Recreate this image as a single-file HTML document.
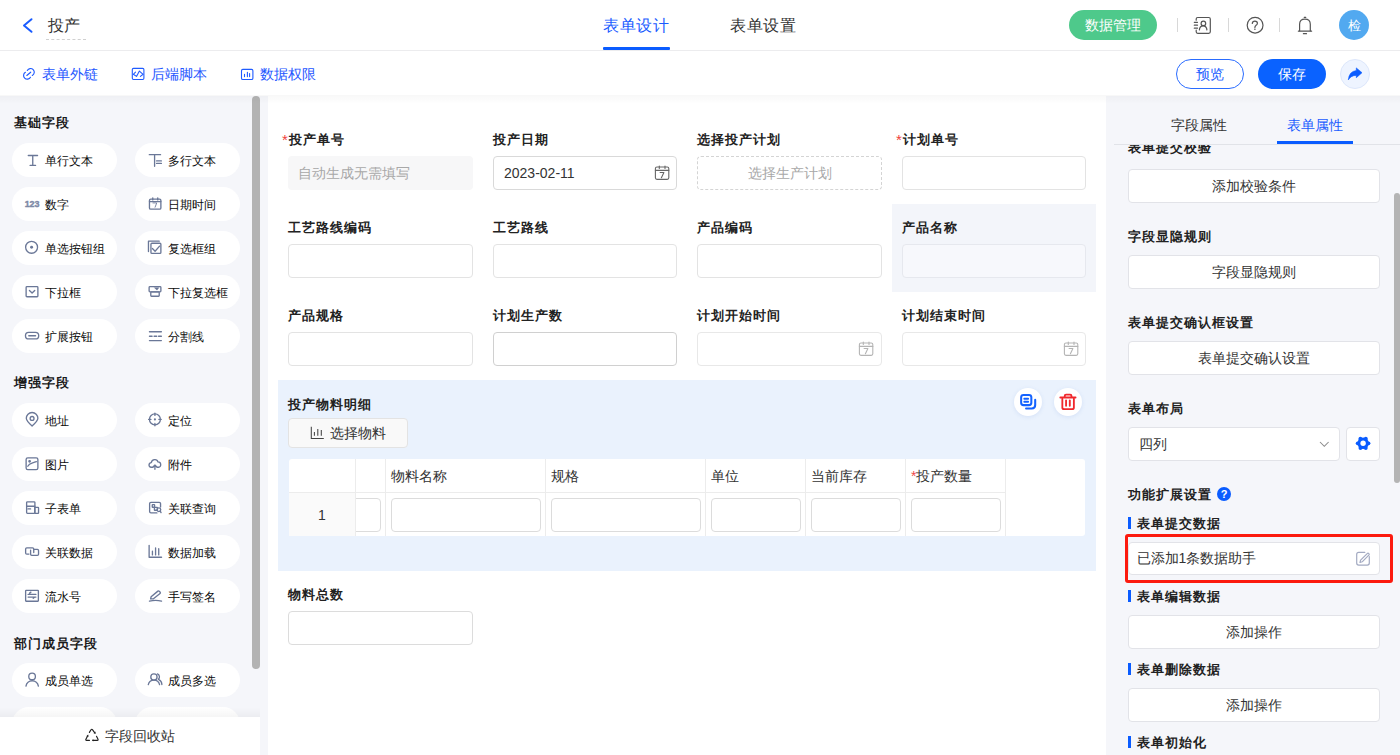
<!DOCTYPE html>
<html><head><meta charset="utf-8">
<style>
*{box-sizing:border-box;margin:0;padding:0}
html,body{width:1400px;height:755px;overflow:hidden;background:#fff;font-family:"Liberation Sans",sans-serif;color:#333}
.a{position:absolute;white-space:nowrap}
.t14{font-size:14px;line-height:20px;height:20px}
.t16{font-size:16px;line-height:20px;height:20px}
.b{font-weight:bold}
svg{position:absolute;overflow:visible}
#hdr{position:absolute;left:0;top:0;width:1400px;height:51px;background:#fff;border-bottom:1px solid #ececee}
#lp{position:absolute;left:0;top:96px;width:268px;height:659px;background:#f5f6fa}
#cv{position:absolute;left:268px;top:96px;width:838px;height:659px;background:#fff}
#rp{position:absolute;left:1106px;top:96px;width:294px;height:659px;background:#f5f6fa}
#shadow{position:absolute;left:0;top:95px;width:1400px;height:9px;background:linear-gradient(rgba(0,0,0,0.03),rgba(0,0,0,0.022) 20%,rgba(0,0,0,0))}
.pill{position:absolute;width:105px;height:34px;border-radius:17px;background:#fff}
.lbl{position:absolute;font-size:13px;letter-spacing:1px;line-height:20px;font-weight:bold;color:#222;white-space:nowrap}
.lbl i{font-style:normal;color:#f04a4a;font-weight:normal}
.inp{position:absolute;width:185px;height:34px;border:1px solid #dcdcdc;border-radius:4px;background:#fff}
.rbtn{position:absolute;left:22px;width:252px;height:34px;border:1px solid #e2e3e8;border-radius:4px;background:#fff;text-align:center;font-size:14px;line-height:32px;color:#333;white-space:nowrap}
.rh{position:absolute;left:22px;font-size:13px;letter-spacing:1px;line-height:20px;font-weight:bold;color:#222;white-space:nowrap}
.bar{position:absolute;left:22px;width:3px;height:12px;background:#0a5cff}

</style></head>
<body>
<div id="hdr"></div>
<div class="a t16" style="left:48px;top:16px;color:#333">投产</div>
<div class="a" style="left:46px;top:39px;width:40px;height:0;border-top:1px dashed #d0d0d0"></div>
<div class="a t16" style="left:603px;top:16px;color:#1a5cff;letter-spacing:0.6px">表单设计</div>
<div class="a" style="left:603px;top:47px;width:67px;height:3px;background:#0a5cff;border-radius:1px"></div>
<div class="a t16" style="left:730px;top:16px;color:#333;letter-spacing:0.6px">表单设置</div>
<div class="a" style="left:1069px;top:10px;width:88px;height:30px;border-radius:15px;background:#4ec98b;color:#fff;font-size:14px;line-height:30px;text-align:center">数据管理</div>
<div class="a" style="left:1177px;top:18px;width:1px;height:14px;background:#d8d8d8"></div>
<div class="a" style="left:1228px;top:18px;width:1px;height:14px;background:#d8d8d8"></div>
<div class="a" style="left:1279px;top:18px;width:1px;height:14px;background:#d8d8d8"></div>
<div class="a" style="left:1339px;top:10px;width:30px;height:30px;border-radius:15px;background:#52a9f0;color:#fff;font-size:13px;line-height:31px;text-align:center">检</div>
<svg style="left:22px;top:18px" width="11" height="15" viewBox="0 0 11 15"><path d="M9.5 1.2L2 7.5L9.5 13.8" fill="none" stroke="#1a5cff" stroke-width="2" stroke-linecap="round" stroke-linejoin="round"/></svg>
<svg style="left:1190px;top:13px" width="26" height="26" viewBox="0 0 26 26"><g fill="none" stroke="#555" stroke-width="1.2" stroke-linecap="round"><path d="M6.2 7.2V6Q6.2 4.5 7.7 4.5H18.8Q20.3 4.5 20.3 6V18.8Q20.3 20.3 18.8 20.3H7.7Q6.2 20.3 6.2 18.8V17.2"/><path d="M4.3 9.3H7.5M4.3 12.2H7.5M4.3 15.2H7.5"/><circle cx="13.4" cy="10.4" r="2.3"/><path d="M9.4 16.9Q9.6 12.8 13.1 12.8Q16.7 12.8 16.9 16.9"/></g></svg>
<svg style="left:1242px;top:13px" width="26" height="26" viewBox="0 0 26 26"><g fill="none" stroke="#555" stroke-width="1.2" stroke-linecap="round"><circle cx="13.1" cy="12.2" r="7.9"/><path d="M10.3 10.4Q10.3 8.1 12.9 8.1Q15.4 8.1 15.4 10.2Q15.4 11.6 13.9 12.4Q12.9 13 12.9 14.6"/></g><circle cx="12.9" cy="16.3" r="0.8" fill="#555"/></svg>
<svg style="left:1292px;top:13px" width="26" height="26" viewBox="0 0 26 26"><g fill="none" stroke="#555" stroke-width="1.2" stroke-linecap="round" stroke-linejoin="round"><path d="M7.6 17.8V11.2Q7.6 6.2 12.95 6.2Q18.3 6.2 18.3 11.2V17.8"/><path d="M6.4 18.2H19.6M12.2 4.3H13.8M11.4 20.7H14.5"/></g></svg>
<div class="a t14" style="left:42px;top:64px;color:#2456ff">表单外链</div>
<div class="a t14" style="left:151px;top:64px;color:#2456ff">后端脚本</div>
<div class="a t14" style="left:260px;top:64px;color:#2456ff">数据权限</div>
<div class="a" style="left:1176px;top:59px;width:68px;height:30px;border:1px solid #2a6cff;border-radius:15px;color:#1a5cff;font-size:14px;line-height:28px;text-align:center">预览</div>
<div class="a" style="left:1258px;top:59px;width:68px;height:30px;border-radius:15px;background:#0a62ff;color:#fff;font-size:14px;line-height:30px;text-align:center">保存</div>
<div class="a" style="left:1340px;top:59px;width:30px;height:30px;border-radius:15px;background:#eef4ff;border:1px solid #dde7fb"></div>
<svg style="left:18px;top:62px" width="20" height="20" viewBox="0 0 20 20"><g fill="none" stroke="#1f5bff" stroke-width="1.15" stroke-linecap="round"><path d="M9.3 8.5A3.7 3.7 0 1 1 14.3 13.5"/><path d="M7.4 10.3A3.7 3.7 0 1 0 12.5 15.3"/><path d="M8.8 13.5L12.7 10.2"/></g></svg>
<svg style="left:128px;top:62px" width="20" height="20" viewBox="0 0 20 20"><g fill="none" stroke="#1f5bff" stroke-width="1.1" stroke-linecap="round" stroke-linejoin="round"><rect x="4.3" y="6.4" width="11.6" height="11.1" rx="1.2"/><path d="M7.5 10.2L5.3 12.3L8.5 14.4L11.4 9.1L15.1 12.3L12.4 14.4"/></g></svg>
<svg style="left:237px;top:62px" width="20" height="20" viewBox="0 0 20 20"><g fill="none" stroke="#1f5bff" stroke-width="1.1" stroke-linecap="round"><rect x="4.5" y="7.4" width="11.4" height="10.1" rx="1.3"/><path d="M7.5 12.3V14.6M10.4 10.3V14.6M12.6 11.5V14.6"/></g></svg>
<svg style="left:1340px;top:60px" width="30" height="30" viewBox="0 0 30 30"><path fill="#0a5cff" stroke="#0a5cff" stroke-width="0.6" stroke-linejoin="round" d="M16.3 7.9L22 12.7L16.3 17.7V15.4Q11 15.3 8.3 19.9Q9 11.5 16.3 10.5Z"/></svg>
<div id="lp"></div>
<div id="cv"></div>
<div id="rp"></div>
<div class="a b" style="left:14px;top:113.1px;font-size:13px;letter-spacing:1px;line-height:20px;color:#1a1a1a">基础字段</div>
<div class="pill" style="left:12px;top:143px"></div>
<svg style="left:20px;top:150px" width="25" height="25" viewBox="0 0 755 755"><g fill="none" stroke="#6a7797" stroke-width="40" stroke-linecap="round" stroke-linejoin="round"><path d="M250 165H530M385 165V465M305 465H470"/></g></svg>
<div class="a" style="left:45px;top:153px;font-size:12px;line-height:16px;color:#0a0a0a">单行文本</div>
<div class="pill" style="left:135px;top:143px"></div>
<svg style="left:143px;top:150px" width="25" height="25" viewBox="0 0 755 755"><g fill="none" stroke="#6a7797" stroke-width="40" stroke-linecap="round" stroke-linejoin="round"><path d="M190 140H530M350 140V490M410 330H555M410 405H555"/></g></svg>
<div class="a" style="left:168px;top:153px;font-size:12px;line-height:16px;color:#0a0a0a">多行文本</div>
<div class="pill" style="left:12px;top:187px"></div>
<svg style="left:20px;top:191px" width="25" height="25" viewBox="0 0 755 755"><g fill="none" stroke="#6a7797" stroke-width="40" stroke-linecap="round" stroke-linejoin="round"><text x="365" y="480" text-anchor="middle" font-family="Liberation Sans" style="font-weight:bold" font-size="270" fill="#7d89a6" stroke="#7d89a6" stroke-width="12">123</text></g></svg>
<div class="a" style="left:45px;top:197px;font-size:12px;line-height:16px;color:#0a0a0a">数字</div>
<div class="pill" style="left:135px;top:187px"></div>
<svg style="left:143px;top:191px" width="25" height="25" viewBox="0 0 755 755"><g fill="none" stroke="#6a7797" stroke-width="40" stroke-linecap="round" stroke-linejoin="round"><rect x="195" y="245" width="345" height="305" rx="40"/><path d="M195 320H540M295 205V270M445 205V270"/><path d="M300 360H415L365 490" stroke-width="26"/></g></svg>
<div class="a" style="left:168px;top:197px;font-size:12px;line-height:16px;color:#0a0a0a">日期时间</div>
<div class="pill" style="left:12px;top:231px"></div>
<svg style="left:20px;top:238px" width="25" height="25" viewBox="0 0 755 755"><g fill="none" stroke="#6a7797" stroke-width="40" stroke-linecap="round" stroke-linejoin="round"><circle cx="350" cy="280" r="180"/><circle cx="350" cy="280" r="45" fill="#6a7797" stroke="none"/></g></svg>
<div class="a" style="left:45px;top:241px;font-size:12px;line-height:16px;color:#0a0a0a">单选按钮组</div>
<div class="pill" style="left:135px;top:231px"></div>
<svg style="left:143px;top:235px" width="25" height="25" viewBox="0 0 755 755"><g fill="none" stroke="#6a7797" stroke-width="40" stroke-linecap="round" stroke-linejoin="round"><path d="M165 500V185H490"/><rect x="240" y="250" width="300" height="305" rx="30"/><path d="M285 410L365 490L500 335"/></g></svg>
<div class="a" style="left:168px;top:241px;font-size:12px;line-height:16px;color:#0a0a0a">复选框组</div>
<div class="pill" style="left:12px;top:275px"></div>
<svg style="left:20px;top:280px" width="25" height="25" viewBox="0 0 755 755"><g fill="none" stroke="#6a7797" stroke-width="40" stroke-linecap="round" stroke-linejoin="round"><rect x="185" y="200" width="355" height="305" rx="25"/><path d="M285 315L365 395L445 315"/></g></svg>
<div class="a" style="left:45px;top:285px;font-size:12px;line-height:16px;color:#0a0a0a">下拉框</div>
<div class="pill" style="left:135px;top:275px"></div>
<svg style="left:143px;top:280px" width="25" height="25" viewBox="0 0 755 755"><g fill="none" stroke="#6a7797" stroke-width="40" stroke-linecap="round" stroke-linejoin="round"><rect x="185" y="200" width="355" height="160" rx="25"/><rect x="235" y="360" width="255" height="130" rx="20"/><path d="M355 240L420 305L470 240Z" fill="#6a7797" stroke-width="20"/></g></svg>
<div class="a" style="left:168px;top:285px;font-size:12px;line-height:16px;color:#0a0a0a">下拉复选框</div>
<div class="pill" style="left:12px;top:319px"></div>
<svg style="left:20px;top:323px" width="25" height="25" viewBox="0 0 755 755"><g fill="none" stroke="#6a7797" stroke-width="40" stroke-linecap="round" stroke-linejoin="round"><rect x="165" y="285" width="400" height="195" rx="97"/><path d="M265 385H470"/></g></svg>
<div class="a" style="left:45px;top:329px;font-size:12px;line-height:16px;color:#0a0a0a">扩展按钮</div>
<div class="pill" style="left:135px;top:319px"></div>
<svg style="left:143px;top:323px" width="25" height="25" viewBox="0 0 755 755"><g fill="none" stroke="#6a7797" stroke-width="40" stroke-linecap="round" stroke-linejoin="round"><path d="M195 265H555M195 400H275M335 400H415M470 400H555M195 530H555"/></g></svg>
<div class="a" style="left:168px;top:329px;font-size:12px;line-height:16px;color:#0a0a0a">分割线</div>
<div class="a b" style="left:14px;top:373.2px;font-size:13px;letter-spacing:1px;line-height:20px;color:#1a1a1a">增强字段</div>
<div class="pill" style="left:12px;top:403px"></div>
<svg style="left:20px;top:408px" width="25" height="25" viewBox="0 0 755 755"><g fill="none" stroke="#6a7797" stroke-width="40" stroke-linecap="round" stroke-linejoin="round"><path d="M365 545C250 440 190 370 190 310A175 175 0 0 1 540 310C540 370 480 440 365 545Z"/><circle cx="365" cy="315" r="58"/></g></svg>
<div class="a" style="left:45px;top:413px;font-size:12px;line-height:16px;color:#0a0a0a">地址</div>
<div class="pill" style="left:135px;top:403px"></div>
<svg style="left:143px;top:408px" width="25" height="25" viewBox="0 0 755 755"><g fill="none" stroke="#6a7797" stroke-width="40" stroke-linecap="round" stroke-linejoin="round"><circle cx="360" cy="345" r="165"/><path d="M360 155V225M360 465V535M170 345H240M480 345H550"/><circle cx="360" cy="345" r="32" fill="#6a7797" stroke="none"/></g></svg>
<div class="a" style="left:168px;top:413px;font-size:12px;line-height:16px;color:#0a0a0a">定位</div>
<div class="pill" style="left:12px;top:447px"></div>
<svg style="left:20px;top:452px" width="25" height="25" viewBox="0 0 755 755"><g fill="none" stroke="#6a7797" stroke-width="40" stroke-linecap="round" stroke-linejoin="round"><rect x="185" y="175" width="355" height="355" rx="50"/><path d="M235 430C280 330 330 350 495 290"/><circle cx="290" cy="280" r="22" fill="#6a7797"/></g></svg>
<div class="a" style="left:45px;top:457px;font-size:12px;line-height:16px;color:#0a0a0a">图片</div>
<div class="pill" style="left:135px;top:447px"></div>
<svg style="left:143px;top:452px" width="25" height="25" viewBox="0 0 755 755"><g fill="none" stroke="#6a7797" stroke-width="40" stroke-linecap="round" stroke-linejoin="round"><path d="M300 460H245C160 460 160 330 250 320C270 215 425 195 450 300C560 300 560 460 470 460H425"/><path d="M360 520V395M310 445L360 395L410 445"/></g></svg>
<div class="a" style="left:168px;top:457px;font-size:12px;line-height:16px;color:#0a0a0a">附件</div>
<div class="pill" style="left:12px;top:491px"></div>
<svg style="left:20px;top:496px" width="25" height="25" viewBox="0 0 755 755"><g fill="none" stroke="#6a7797" stroke-width="40" stroke-linecap="round" stroke-linejoin="round"><rect x="200" y="175" width="250" height="350" rx="25"/><path d="M200 310H450M240 390H320"/><rect x="445" y="345" width="115" height="180" rx="15"/></g></svg>
<div class="a" style="left:45px;top:501px;font-size:12px;line-height:16px;color:#0a0a0a">子表单</div>
<div class="pill" style="left:135px;top:491px"></div>
<svg style="left:143px;top:496px" width="25" height="25" viewBox="0 0 755 755"><g fill="none" stroke="#6a7797" stroke-width="40" stroke-linecap="round" stroke-linejoin="round"><path d="M420 510H240Q200 510 200 470V230Q200 190 240 190H490Q530 190 530 230V330"/><rect x="280" y="260" width="70" height="80" rx="10"/><rect x="345" y="345" width="90" height="85" rx="10"/><circle cx="480" cy="415" r="55"/><path d="M520 455L545 500"/></g></svg>
<div class="a" style="left:168px;top:501px;font-size:12px;line-height:16px;color:#0a0a0a">关联查询</div>
<div class="pill" style="left:12px;top:535px"></div>
<svg style="left:20px;top:540px" width="25" height="25" viewBox="0 0 755 755"><g fill="none" stroke="#6a7797" stroke-width="40" stroke-linecap="round" stroke-linejoin="round"><path d="M270 425H205Q170 425 170 390V275Q170 240 205 240H380Q415 240 415 275V380"/><path d="M320 310V430Q320 465 355 465H525Q560 465 560 430V320Q560 285 525 285H430"/></g></svg>
<div class="a" style="left:45px;top:545px;font-size:12px;line-height:16px;color:#0a0a0a">关联数据</div>
<div class="pill" style="left:135px;top:535px"></div>
<svg style="left:143px;top:540px" width="25" height="25" viewBox="0 0 755 755"><g fill="none" stroke="#6a7797" stroke-width="40" stroke-linecap="round" stroke-linejoin="round"><path d="M185 160V520H560M285 340V450M380 240V450M475 265V450"/></g></svg>
<div class="a" style="left:168px;top:545px;font-size:12px;line-height:16px;color:#0a0a0a">数据加载</div>
<div class="pill" style="left:12px;top:579px"></div>
<svg style="left:20px;top:584px" width="25" height="25" viewBox="0 0 755 755"><g fill="none" stroke="#6a7797" stroke-width="40" stroke-linecap="round" stroke-linejoin="round"><rect x="170" y="195" width="385" height="325" rx="15"/><path d="M245 315H480M245 395H480M290 275L330 245M400 430L440 400"/></g></svg>
<div class="a" style="left:45px;top:589px;font-size:12px;line-height:16px;color:#0a0a0a">流水号</div>
<div class="pill" style="left:135px;top:579px"></div>
<svg style="left:143px;top:584px" width="25" height="25" viewBox="0 0 755 755"><g fill="none" stroke="#6a7797" stroke-width="40" stroke-linecap="round" stroke-linejoin="round"><path d="M230 450L245 385L450 215Q470 200 490 220L520 250Q535 270 515 285L305 450Z"/><path d="M195 515Q380 475 560 515"/></g></svg>
<div class="a" style="left:168px;top:589px;font-size:12px;line-height:16px;color:#0a0a0a">手写签名</div>
<div class="a b" style="left:14px;top:633.8px;font-size:13px;letter-spacing:1px;line-height:20px;color:#1a1a1a">部门成员字段</div>
<div class="pill" style="left:12px;top:663px"></div>
<svg style="left:20px;top:668px" width="25" height="25" viewBox="0 0 755 755"><g fill="none" stroke="#6a7797" stroke-width="40" stroke-linecap="round" stroke-linejoin="round"><circle cx="365" cy="255" r="100"/><path d="M180 545A190 190 0 0 1 555 545"/></g></svg>
<div class="a" style="left:45px;top:673px;font-size:12px;line-height:16px;color:#0a0a0a">成员单选</div>
<div class="pill" style="left:135px;top:663px"></div>
<svg style="left:143px;top:668px" width="25" height="25" viewBox="0 0 755 755"><g fill="none" stroke="#6a7797" stroke-width="40" stroke-linecap="round" stroke-linejoin="round"><circle cx="330" cy="270" r="95"/><path d="M160 500A175 175 0 0 1 500 500M435 180A95 95 0 0 1 465 340M480 350A175 175 0 0 1 570 500"/></g></svg>
<div class="a" style="left:168px;top:673px;font-size:12px;line-height:16px;color:#0a0a0a">成员多选</div>
<div class="pill" style="left:12px;top:707px"></div><div class="pill" style="left:135px;top:707px"></div>
<div class="a" style="left:252px;top:96px;width:8px;height:573px;border-radius:4px;background:#b3b3b3"></div>
<div class="a" style="left:0;top:707px;width:260px;height:10px;background:linear-gradient(rgba(0,0,0,0),rgba(0,0,0,0.04))"></div>
<div class="a" style="left:0;top:717px;width:260px;height:38px;background:#fff"></div>
<svg style="left:80px;top:723px" width="24" height="24" viewBox="0 0 24 24"><g fill="none" stroke="#222" stroke-width="1.15" stroke-linecap="round" stroke-linejoin="round"><path d="M9.4 9.4L11 6.8Q11.8 5.7 12.6 6.8L14.6 9.6"/><path d="M16.5 13.3L18 16.3Q18.4 17.3 17.3 17.3H13"/><path d="M9.5 17.3H6.5Q5.4 17.3 5.9 16.3L7.6 12.9"/></g><g fill="#222"><path d="M13.6 10.4L15.9 10.8L15.3 8.5Z"/><path d="M13.3 16.1L11.9 17.3L13.3 18.5Z"/><path d="M6.3 13.3L8.6 13.8L8.2 11.6Z"/></g></svg>
<div class="a" style="left:105px;top:726px;font-size:14px;line-height:20px;color:#333">字段回收站</div>
<div class="a" style="left:892px;top:204px;width:204px;height:88px;background:#f3f5fa"></div>
<div class="a" style="left:282px;top:130px;font-size:15px;line-height:20px;color:#f0413a">*</div><div class="lbl" style="left:289px;top:130px">投产单号</div>
<div class="a" style="left:288px;top:156px;width:185px;height:34px;border-radius:4px;background:#f7f7f8;color:#a8a8a8;font-size:14px;line-height:34px;padding-left:10px">自动生成无需填写</div>
<div class="lbl" style="left:493px;top:130px">投产日期</div>
<div class="inp" style="left:493px;top:156px;width:184px;border-color:#d9d9d9"><div class="a" style="left:10px;top:6px;font-size:14px;line-height:20px;color:#333">2023-02-11</div></div>
<svg style="left:650.5px;top:159.5px" width="22" height="22" viewBox="0 0 22 22"><g fill="none" stroke="#666" stroke-width="1.1" stroke-linecap="round" stroke-linejoin="round"><rect x="4.4" y="7" width="13.4" height="12.4" rx="1.6"/><path d="M4.4 10.4H17.8M8.3 6.1V8.5M14 6.1V8.5M9.1 12.5H12.9L10.4 17.7"/></g></svg>
<div class="lbl" style="left:697px;top:130px">选择投产计划</div>
<div class="a" style="left:697px;top:156px;width:185px;height:34px;border:1px dashed #d4d4d4;border-radius:4px;color:#a8a8a8;font-size:14px;line-height:32px;text-align:center">选择生产计划</div>
<div class="a" style="left:896px;top:130px;font-size:15px;line-height:20px;color:#f0413a">*</div><div class="lbl" style="left:903px;top:130px">计划单号</div>
<div class="inp" style="left:902px;top:156px;width:184px;border-color:#e3e3e3"></div>
<div class="lbl" style="left:288px;top:218px">工艺路线编码</div>
<div class="inp" style="left:288px;top:244px;width:185px;border-color:#e3e3e3"></div>
<div class="lbl" style="left:493px;top:218px">工艺路线</div>
<div class="inp" style="left:493px;top:244px;width:184px;border-color:#e3e3e3"></div>
<div class="lbl" style="left:697px;top:218px">产品编码</div>
<div class="inp" style="left:697px;top:244px;width:185px;border-color:#e3e3e3"></div>
<div class="lbl" style="left:902px;top:218px">产品名称</div>
<div class="inp" style="left:902px;top:244px;width:184px;background:#f7f8fc;border-color:#e6e8ee"></div>
<div class="lbl" style="left:288px;top:306px">产品规格</div>
<div class="inp" style="left:288px;top:332px;width:185px;border-color:#e3e3e3"></div>
<div class="lbl" style="left:493px;top:306px">计划生产数</div>
<div class="inp" style="left:493px;top:332px;width:184px;border-color:#d0d0d0"></div>
<div class="lbl" style="left:697px;top:306px">计划开始时间</div>
<div class="inp" style="left:697px;top:332px;width:185px;border-color:#e8e8e8"></div>
<svg style="left:854.5px;top:336px" width="22" height="22" viewBox="0 0 22 22"><g fill="none" stroke="#b4b4b4" stroke-width="1.1" stroke-linecap="round" stroke-linejoin="round"><rect x="4.4" y="7" width="13.4" height="12.4" rx="1.6"/><path d="M4.4 10.4H17.8M8.3 6.1V8.5M14 6.1V8.5M9.1 12.5H12.9L10.4 17.7"/></g></svg>
<div class="lbl" style="left:902px;top:306px">计划结束时间</div>
<div class="inp" style="left:902px;top:332px;width:184px;border-color:#e8e8e8"></div>
<svg style="left:1059.5px;top:336px" width="22" height="22" viewBox="0 0 22 22"><g fill="none" stroke="#b4b4b4" stroke-width="1.1" stroke-linecap="round" stroke-linejoin="round"><rect x="4.4" y="7" width="13.4" height="12.4" rx="1.6"/><path d="M4.4 10.4H17.8M8.3 6.1V8.5M14 6.1V8.5M9.1 12.5H12.9L10.4 17.7"/></g></svg>
<div class="a" style="left:278px;top:380px;width:818px;height:191px;background:#eaf2fd"></div>
<div class="lbl" style="left:288px;top:395px">投产物料明细</div>
<div class="a" style="left:288px;top:418px;width:120px;height:30px;border:1px solid #e3e3e3;border-radius:4px;background:#f9f9f9"></div>
<svg style="left:300px;top:415px" width="40" height="35" viewBox="0 0 40 35"><path d="M11.3 11.8V23.4H23.8M14.4 17.1V20.8M17.8 13.9V20.8M21.3 15V20.8" fill="none" stroke="#444" stroke-width="1.05"/></svg>
<div class="a" style="left:330px;top:423px;font-size:14px;line-height:20px;color:#333">选择物料</div>
<div class="a" style="left:289px;top:459px;width:796px;height:77px;background:#fff;border-radius:3px"></div>
<div class="a" style="left:289px;top:492px;width:66px;height:44px;background:#fafafa"></div>
<div class="a" style="left:289px;top:492px;width:716px;height:1px;background:#ececec"></div>
<div class="a" style="left:355px;top:459px;width:1px;height:77px;background:#ececec"></div>
<div class="a" style="left:385px;top:459px;width:1px;height:77px;background:#ececec"></div>
<div class="a" style="left:545px;top:459px;width:1px;height:77px;background:#ececec"></div>
<div class="a" style="left:705px;top:459px;width:1px;height:77px;background:#ececec"></div>
<div class="a" style="left:805px;top:459px;width:1px;height:77px;background:#ececec"></div>
<div class="a" style="left:905px;top:459px;width:1px;height:77px;background:#ececec"></div>
<div class="a" style="left:1005px;top:459px;width:1px;height:77px;background:#ececec"></div>
<div class="a" style="left:318px;top:505px;font-size:14px;line-height:20px;color:#333">1</div>
<div class="a" style="left:356px;top:498px;width:29px;height:34px;overflow:hidden"><div class="a" style="left:-160px;top:0;width:185px;height:34px;border:1px solid #dcdcdc;border-radius:4px"></div></div>
<div class="a" style="left:391px;top:466px;font-size:14px;line-height:20px;color:#333">物料名称</div>
<div class="a" style="left:391px;top:498px;width:150px;height:34px;border:1px solid #dcdcdc;border-radius:4px;background:#fff"></div>
<div class="a" style="left:551px;top:466px;font-size:14px;line-height:20px;color:#333">规格</div>
<div class="a" style="left:551px;top:498px;width:150px;height:34px;border:1px solid #dcdcdc;border-radius:4px;background:#fff"></div>
<div class="a" style="left:711px;top:466px;font-size:14px;line-height:20px;color:#333">单位</div>
<div class="a" style="left:711px;top:498px;width:90px;height:34px;border:1px solid #dcdcdc;border-radius:4px;background:#fff"></div>
<div class="a" style="left:811px;top:466px;font-size:14px;line-height:20px;color:#333">当前库存</div>
<div class="a" style="left:811px;top:498px;width:90px;height:34px;border:1px solid #dcdcdc;border-radius:4px;background:#fff"></div>
<div class="a" style="left:911px;top:466px;font-size:14px;line-height:20px;color:#333"><span style="color:#f04a4a">*</span>投产数量</div>
<div class="a" style="left:911px;top:498px;width:90px;height:34px;border:1px solid #dcdcdc;border-radius:4px;background:#fff"></div>
<div class="a" style="left:1014px;top:388px;width:28px;height:28px;border-radius:14px;background:#fff;box-shadow:0 1px 4px rgba(60,110,200,0.12)"></div>
<div class="a" style="left:1054px;top:388px;width:28px;height:28px;border-radius:14px;background:#fff;box-shadow:0 1px 4px rgba(60,110,200,0.12)"></div>
<svg style="left:1005px;top:380px" width="95" height="45" viewBox="0 0 1400 663"><g fill="none" stroke="#1463ff" stroke-width="30" stroke-linecap="round"><rect x="238" y="220" width="150" height="150" rx="35"/><path d="M285 275H340M285 320H340"/><path d="M445 290V370Q445 420 395 420H310"/></g><g fill="none" stroke="#f0282d" stroke-width="27" stroke-linecap="round" stroke-linejoin="round"><path d="M815 258H1040M880 250V235Q880 215 900 215H960Q980 215 980 235V250"/><path d="M845 275V405Q845 430 870 430H990Q1015 430 1015 405V275M900 300V380M955 300V380"/></g></svg>
<div class="lbl" style="left:288px;top:585px">物料总数</div>
<div class="inp" style="left:288px;top:611px;width:185px;border-color:#dcdcdc"></div>
<div class="a" style="left:1171px;top:114.5px;font-size:14px;line-height:20px;color:#333">字段属性</div>
<div class="a" style="left:1287px;top:114.5px;font-size:14px;line-height:20px;color:#1a5cff">表单属性</div>
<div class="a" style="left:1277px;top:141px;width:76px;height:3px;background:#0a5cff"></div>
<div class="a" style="left:1114px;top:144px;width:286px;height:1px;background:#e1e3e8"></div>
<div class="a" style="left:1106px;top:145px;width:294px;height:610px;overflow:hidden">
<div class="rh" style="top:-7.5px">表单提交校验</div>
<div class="rbtn" style="top:24px;height:34px;line-height:32px">添加校验条件</div>
<div class="rh" style="top:81.5px">字段显隐规则</div>
<div class="rbtn" style="top:110px;height:34px;line-height:32px">字段显隐规则</div>
<div class="rh" style="top:167.5px">表单提交确认框设置</div>
<div class="rbtn" style="top:196px;height:34px;line-height:32px">表单提交确认设置</div>
<div class="rh" style="top:253.5px">表单布局</div>
<div class="rbtn" style="top:282px;width:212px;text-align:left;padding-left:9.5px">四列</div>
<svg style="left:213px;top:295.5px" width="11" height="7" viewBox="0 0 11 7"><path d="M1 1L5.3 5.3L9.6 1" fill="none" stroke="#8a8a8a" stroke-width="1.05"/></svg>
<div class="rbtn" style="left:240px;top:282px;width:34px"></div>
<svg style="left:244px;top:286px" width="26" height="26" viewBox="0 0 26 26"><g fill="#0a5cff"><circle cx="13.1" cy="12.3" r="5.8"/><circle cx="18.50" cy="12.30" r="1.9"/><circle cx="15.80" cy="16.98" r="1.9"/><circle cx="10.40" cy="16.98" r="1.9"/><circle cx="7.70" cy="12.30" r="1.9"/><circle cx="10.40" cy="7.62" r="1.9"/><circle cx="15.80" cy="7.62" r="1.9"/></g><circle cx="13.1" cy="12.3" r="2.7" fill="#fff"/></svg>
<div class="rh" style="top:340.0px">功能扩展设置</div>
<div class="a" style="left:111px;top:342px;width:14px;height:14px;border-radius:7px;background:#0a5cff;color:#fff;font-size:11px;line-height:14px;text-align:center;font-weight:bold">?</div>
<div class="bar" style="top:372px"></div>
<div class="rh" style="left:31px;top:368.5px">表单提交数据</div>
<div class="rbtn" style="top:397px;height:33px;text-align:left;padding-left:7.5px;line-height:31px">已添加1条数据助手</div>
<svg style="left:244px;top:400px" width="26" height="26" viewBox="0 0 26 26"><g fill="none" stroke="#a3aac2" stroke-width="1.2" stroke-linejoin="round" stroke-linecap="round"><path d="M14.8 7.4H8.7Q6.7 7.4 6.7 9.4V18.1Q6.7 20.1 8.7 20.1H17.3Q19.3 20.1 19.3 18.1V11.7"/><path d="M10 17.5L10.6 15.2L17.2 8.6Q18 7.8 18.8 8.6Q19.6 9.4 18.8 10.2L12.2 16.8Z"/></g></svg>
<div class="a" style="left:19px;top:389px;width:268px;height:49px;border:3px solid #fc1a0e;border-radius:3px"></div>
<div class="bar" style="top:445px"></div>
<div class="rh" style="left:31px;top:441.5px">表单编辑数据</div>
<div class="rbtn" style="top:470px;height:34px;line-height:32px">添加操作</div>
<div class="bar" style="top:518px"></div>
<div class="rh" style="left:31px;top:514.5px">表单删除数据</div>
<div class="rbtn" style="top:543px;height:34px;line-height:32px">添加操作</div>
<div class="bar" style="top:591px"></div>
<div class="rh" style="left:31px;top:587.5px">表单初始化</div>
</div>
<div class="a" style="left:1394px;top:193px;width:6px;height:290px;border-radius:3px;background:#b4b4b4"></div>
<div id="shadow"></div>
</body></html>
